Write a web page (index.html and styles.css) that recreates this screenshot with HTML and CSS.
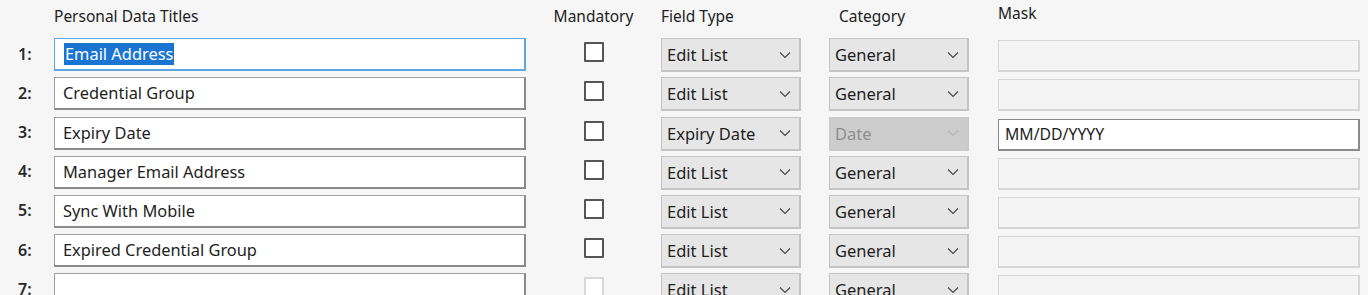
FILE: index.html
```html
<!DOCTYPE html>
<html lang="en">
<head>
    <meta charset="UTF-8">
    <meta name="viewport" content="width=device-width, initial-scale=1.0">
    <title>Personal Data Titles</title>
    <link rel="stylesheet" href="styles.css">
</head>
<body>
    <div class="grid">
        <div class="head"></div>
        <div class="head">Personal Data Titles</div>
        <div class="head center">Mandatory</div>
        <div class="head">Field Type</div>
        <div class="head pad">Category</div>
        <div class="head mask-head">Mask</div>

        <div class="num">1:</div>
        <div class="field focused"><span class="selected">Email Address</span></div>
        <div class="check-cell"><span class="check"></span></div>
        <div class="select"><span>Edit List</span><svg width="12" height="8" viewBox="0 0 12 8"><path d="M1 1.5 L6 6.5 L11 1.5" fill="none" stroke="#444" stroke-width="1.1"/></svg></div>
        <div class="select"><span>General</span><svg width="12" height="8" viewBox="0 0 12 8"><path d="M1 1.5 L6 6.5 L11 1.5" fill="none" stroke="#444" stroke-width="1.1"/></svg></div>
        <div class="mask disabled"></div>

        <div class="num">2:</div>
        <div class="field">Credential Group</div>
        <div class="check-cell"><span class="check"></span></div>
        <div class="select"><span>Edit List</span><svg width="12" height="8" viewBox="0 0 12 8"><path d="M1 1.5 L6 6.5 L11 1.5" fill="none" stroke="#444" stroke-width="1.1"/></svg></div>
        <div class="select"><span>General</span><svg width="12" height="8" viewBox="0 0 12 8"><path d="M1 1.5 L6 6.5 L11 1.5" fill="none" stroke="#444" stroke-width="1.1"/></svg></div>
        <div class="mask disabled"></div>

        <div class="num">3:</div>
        <div class="field">Expiry Date</div>
        <div class="check-cell"><span class="check"></span></div>
        <div class="select"><span>Expiry Date</span><svg width="12" height="8" viewBox="0 0 12 8"><path d="M1 1.5 L6 6.5 L11 1.5" fill="none" stroke="#444" stroke-width="1.1"/></svg></div>
        <div class="select off"><span>Date</span><svg width="12" height="8" viewBox="0 0 12 8"><path d="M1 1.5 L6 6.5 L11 1.5" fill="none" stroke="#b5b5b5" stroke-width="1.1"/></svg></div>
        <div class="mask">MM/DD/YYYY</div>

        <div class="num">4:</div>
        <div class="field">Manager Email Address</div>
        <div class="check-cell"><span class="check"></span></div>
        <div class="select"><span>Edit List</span><svg width="12" height="8" viewBox="0 0 12 8"><path d="M1 1.5 L6 6.5 L11 1.5" fill="none" stroke="#444" stroke-width="1.1"/></svg></div>
        <div class="select"><span>General</span><svg width="12" height="8" viewBox="0 0 12 8"><path d="M1 1.5 L6 6.5 L11 1.5" fill="none" stroke="#444" stroke-width="1.1"/></svg></div>
        <div class="mask disabled"></div>

        <div class="num">5:</div>
        <div class="field">Sync With Mobile</div>
        <div class="check-cell"><span class="check"></span></div>
        <div class="select"><span>Edit List</span><svg width="12" height="8" viewBox="0 0 12 8"><path d="M1 1.5 L6 6.5 L11 1.5" fill="none" stroke="#444" stroke-width="1.1"/></svg></div>
        <div class="select"><span>General</span><svg width="12" height="8" viewBox="0 0 12 8"><path d="M1 1.5 L6 6.5 L11 1.5" fill="none" stroke="#444" stroke-width="1.1"/></svg></div>
        <div class="mask disabled"></div>

        <div class="num">6:</div>
        <div class="field">Expired Credential Group</div>
        <div class="check-cell"><span class="check"></span></div>
        <div class="select"><span>Edit List</span><svg width="12" height="8" viewBox="0 0 12 8"><path d="M1 1.5 L6 6.5 L11 1.5" fill="none" stroke="#444" stroke-width="1.1"/></svg></div>
        <div class="select"><span>General</span><svg width="12" height="8" viewBox="0 0 12 8"><path d="M1 1.5 L6 6.5 L11 1.5" fill="none" stroke="#444" stroke-width="1.1"/></svg></div>
        <div class="mask disabled"></div>

        <div class="num">7:</div>
        <div class="field"></div>
        <div class="check-cell"><span class="check faint"></span></div>
        <div class="select"><span>Edit List</span><svg width="12" height="8" viewBox="0 0 12 8"><path d="M1 1.5 L6 6.5 L11 1.5" fill="none" stroke="#444" stroke-width="1.1"/></svg></div>
        <div class="select"><span>General</span><svg width="12" height="8" viewBox="0 0 12 8"><path d="M1 1.5 L6 6.5 L11 1.5" fill="none" stroke="#444" stroke-width="1.1"/></svg></div>
        <div class="mask disabled"></div>
    </div>
</body>
</html>
```

FILE: styles.css
```css
body {
    margin: 0;
    background: #f6f6f6;
    font-family: "Noto Sans", "Open Sans", Arial, sans-serif;
    color: #1e1e1e;
    height: 295px;
    overflow: hidden;
}
.grid {
    display: grid;
    grid-template-columns: 36px 472px 135px 168px 169px 362px;
    grid-template-rows: 32px repeat(7, 33px);
    row-gap: 6.2px;
    padding-left: 18px;
}
.head {
    font-size: 15.5px;
    color: #222;
    padding-top: 5px;
    white-space: nowrap;
}
.head.center {
    text-align: center;
}
.head.pad {
    padding-left: 10px;
}
.head.mask-head {
    padding-top: 2px;
}
.num {
    font-size: 16px;
    font-weight: 600;
    color: #2a2a2a;
    align-self: center;
    padding-bottom: 2px;
}
.field {
    box-sizing: border-box;
    height: 33px;
    background: white;
    border-style: solid;
    border-width: 1px 2px 2px 1px;
    border-color: #a0a0a0 #8a8a8a #8a8a8a #a0a0a0;
    padding: 0 8px;
    font-size: 16.4px;
    line-height: 30px;
    white-space: nowrap;
    overflow: hidden;
}
.field.focused {
    border-color: #5ea5e6;
    padding-left: 9px;
}
.selected {
    background: #1a75d2;
    color: white;
    display: inline-block;
    line-height: 22px;
    padding: 0 1px;
}
.check-cell {
    display: flex;
    justify-content: center;
    align-items: flex-start;
    padding-top: 4px;
}
.check {
    width: 16px;
    height: 16px;
    border: 2px solid #555;
    border-radius: 1px;
    background: white;
}
.check.faint {
    border-color: #d8d8d8;
}
.select {
    box-sizing: border-box;
    width: 140px;
    height: 34px;
    display: flex;
    align-items: center;
    justify-content: space-between;
    background: #e6e6e6;
    border-style: solid;
    border-width: 1px 2px 2px 1px;
    border-color: #c4c4c4;
    padding: 0 8px 0 5px;
    font-size: 16.5px;
    white-space: nowrap;
}
.select.off {
    background: #cccccc;
    color: #8e8e8e;
    border-color: #c9c9c9;
}
.mask {
    box-sizing: border-box;
    width: 362px;
    height: 32px;
    margin-top: 2px;
    background: white;
    border-style: solid;
    border-width: 1px 2px 2px 1px;
    border-color: #8a8a8a;
    padding: 0 6px;
    font-size: 15.8px;
    line-height: 28px;
}
.mask.disabled {
    background: #f4f4f4;
    border-color: #d6d6d6;
}
```
